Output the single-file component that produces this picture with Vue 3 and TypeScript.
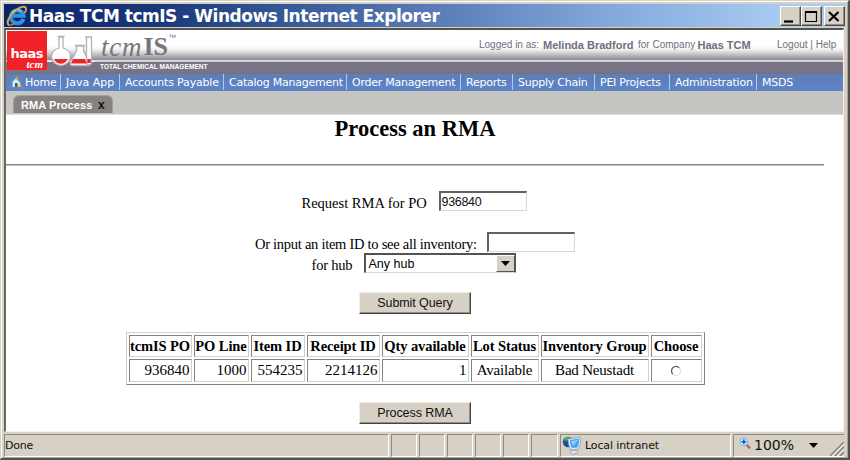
<script setup lang="ts">
import { ref } from 'vue'

interface MenuItem { label: string; key: string }

const menu: MenuItem[] = [
  { label: 'Home', key: 'home' },
  { label: 'Java App', key: 'java' },
  { label: 'Accounts Payable', key: 'accounts' },
  { label: 'Catalog Management', key: 'catalog' },
  { label: 'Order Management', key: 'order' },
  { label: 'Reports', key: 'reports' },
  { label: 'Supply Chain', key: 'supply' },
  { label: 'PEI Projects', key: 'pei' },
  { label: 'Administration', key: 'admin' },
  { label: 'MSDS', key: 'msds' },
]
const headers = ['tcmIS PO', 'PO Line', 'Item ID', 'Receipt ID', 'Qty available', 'Lot Status', 'Inventory Group', 'Choose']
const widths = [63, 55, 54, 73, 87, 68, 108, 51]
const row = ['936840', '1000', '554235', '2214126', '1', 'Available', 'Bad Neustadt']
const po = ref('936840')
const item = ref('')
</script>

<template>
  <div class="window">
    <header class="titlebar">
      <svg class="ie" width="22" height="22" viewBox="0 0 22 22">
        <path d="M17.4 13.8A6.400 6.400 0 1 1 17.600 10.800H6.200" fill="none" stroke="#2f8fe0" stroke-width="4" />
        <path d="M6 8.200A5.600 5.600 0 0 1 15.500 6.500" fill="none" stroke="#9adcff" stroke-width="1.300" />
        <path d="M3.500 20.500C-.800 18.500 3.400 10.200 9.400 5.400C14 1.700 19.300 .400 20 3.400C20.400 5 19.200 7.200 18.600 8" fill="none" stroke="#e2a63c" stroke-width="1.900" />
        <path d="M3.600 20.300C5.600 20.400 8 18.800 9 18" fill="none" stroke="#c98a2e" stroke-width="1.300" />
      </svg>
      <h1 class="caption">Haas TCM tcmIS - Windows Internet Explorer</h1>
      <div class="controls">
        <button class="ctl" aria-label="Minimize"><svg width="18" height="18"><path d="M3 14.500h9" stroke="#000" stroke-width="2.200" /></svg></button>
        <button class="ctl" aria-label="Maximize"><svg width="18" height="18"><path d="M3.500 4.500h11v10h-11z" fill="none" stroke="#000" stroke-width="1.200" /><path d="M3 5h12" stroke="#000" stroke-width="2" /></svg></button>
        <button class="ctl close" aria-label="Close"><svg width="18" height="18"><path d="M4 5l9.500 9M13.500 5L4 14" stroke="#000" stroke-width="2.100" /></svg></button>
      </div>
    </header>

    <div class="viewport">
      <div class="banner">
        <div class="haas"><b>haas</b><i>tcm</i></div>
        <svg class="flasks" width="48" height="38" viewBox="0 0 48 38">
          <g fill="#fff" stroke="#b4b1b8" stroke-width="1.300">
            <path d="M10.500 6.500h7M12 7v11C7 19.500 4.500 22.500 4.500 26C4.500 31.500 9 35.500 14 35.500S23.500 31.500 23.500 26C23.500 22.500 20.500 19.500 16 18V7z" />
            <path d="M27.500 15.500h11M29.500 16v5L23.500 32c-1 2 0 3.500 2 3.500h15c2 0 3-1.500 2-3.500L36.500 21v-5z" />
            <path d="M38 7h7M39.500 7v25c0 4 5 4 5 0V7z" />
          </g>
          <path d="M7 29h14c-2 3-4 4.800-7 4.800s-6-2-7-4.800z" fill="#ef252b" />
          <path d="M26 29h12l2 4.500H24z" fill="#ef252b" />
          <path d="M40.300 29h3.400v4h-3.400z" fill="#ef252b" />
          <path d="M0 31.500h4.500M45 31.500h3" stroke="#fff" stroke-width="1" />
        </svg>
        <div class="brand">
          <div class="logo"><i>tcm</i><b>IS</b><sup>™</sup></div>
          <div class="tagline">TOTAL CHEMICAL MANAGEMENT</div>
        </div>
        <div class="login"><span class="lg">Logged in as:</span><b class="user">Melinda Bradford</b><span class="fc">for Company</span><b class="company">Haas TCM</b></div>
        <div class="links">Logout | Help</div>
      </div>

      <nav class="menu">
        <a v-for="m in menu" :key="m.key" :class="['entry', m.key]">
          <svg v-if="m.key === 'home'" class="house" width="13" height="12" viewBox="0 0 13 12">
            <path d="M2.500 5.500v5.500h7.500V5.500L6 2z" fill="#d9edf5" />
            <path d="M.800 6.700L5.700 1.500L11.200 6.700" fill="none" stroke="#4aa5b5" stroke-width="1.500" />
            <path d="M6.300 .500h2v3h-2z" fill="#d9a04c" />
            <path d="M5 7h2.500v4H5z" fill="#52565c" />
            <path d="M8 8h3v3H8z" fill="#efc078" />
          </svg>
          <span>{{ m.label }}</span>
        </a>
      </nav>

      <div class="tabs"><div class="tab"><span>RMA Process</span><b>x</b></div></div>

      <main class="page">
        <h2>Process an RMA</h2>
        <hr>
        <div class="line po"><label>Request RMA for PO</label><input v-model="po" type="text"></div>
        <div class="line item"><label>Or input an item ID to see all inventory:</label><input v-model="item" type="text"></div>
        <div class="line hub">
          <label>for hub</label>
          <div class="select"><span>Any hub</span><i class="drop"><svg width="9" height="5"><path d="M0 0h9L4.500 5z" /></svg></i></div>
        </div>
        <button class="btn submit">Submit Query</button>
        <table>
          <colgroup><col v-for="(w, i) in widths" :key="i" :style="{ width: w + 'px' }"></colgroup>
          <tbody>
            <tr><th v-for="h in headers" :key="h">{{ h }}</th></tr>
            <tr>
              <td v-for="(c, i) in row" :key="i" :class="i < 5 ? 'num' : 'txt'">{{ c }}</td>
              <td><svg class="radio" width="12" height="12" viewBox="0 0 12 12"><circle cx="6" cy="6" r="4.500" fill="#fff" stroke="#dedad2" /><path d="M2.800 9.200A4.500 4.500 0 0 1 9.200 2.800" fill="none" stroke="#606060" stroke-width="1.300" /></svg></td>
            </tr>
          </tbody>
        </table>
        <button class="btn process">Process RMA</button>
      </main>
    </div>

    <footer class="status">
      <div class="pane done">Done</div>
      <div v-for="n in 5" :key="n" class="pane slot"></div>
      <div class="pane slot last"></div>
      <div class="pane zone">
        <svg width="20" height="20" viewBox="0 0 20 20">
          <path d="M11 15l4 .500 1 2.500-6 1.500-2-2z" fill="#dfe3ea" stroke="#8d94a5" stroke-width=".700" />
          <circle cx="6" cy="7" r="5.200" fill="#1d4f9c" />
          <path d="M2 5c1-3 4-4 6-3L6 5 4 6z" fill="#55ad60" />
          <path d="M6 4l12-2c1 4 .500 9-1.500 12L9 15C7 12 6 8 6 4z" fill="#e5ebf5" stroke="#7d8cb0" stroke-width=".700" />
          <path d="M8 5l9-1.400c.500 3 0 6-1.500 9L10 13C8.500 11 8 8 8 5z" fill="#46a5ef" />
          <path d="M9 6l7-1-5 6z" fill="#8cd0fa" />
        </svg>
        <span>Local intranet</span>
      </div>
      <div class="pane zoom">
        <svg class="mag" width="12" height="13" viewBox="0 0 12 13"><path d="M7.500 7.500l3.500 4" stroke="#a36a45" stroke-width="2" /><circle cx="4.800" cy="4.800" r="4" fill="#d5ecff" stroke="#7daee0" /><path d="M4.800 2.300v5M2.300 4.800h5" stroke="#1558b5" stroke-width="1.600" /></svg>
        <span>100%</span>
        <svg class="tri" width="9" height="5"><path d="M0 0h9L4.500 5z" /></svg>
        <svg class="grip" width="14" height="14" viewBox="0 0 14 14"><path d="M0 14L14 0M5 14l9-9M10 14l4-4" stroke="#85827c" stroke-width="1.500" /><path d="M2 14L14 2M7 14l7-7" stroke="#fff" stroke-width="1" /></svg>
      </div>
    </footer>
  </div>
</template>

<style>
body { margin: 0; overflow: hidden; }
</style>

<style scoped>
* { box-sizing: border-box; }
.window { width: 850px; height: 460px; background: #d6d0c5; border: 1px solid #d6d0c5; border-right: 2px solid #55534f; border-bottom: 2px solid #55534f; box-shadow: inset 1px 1px #fff, inset -1px -1px #a9a59c; padding: 3px; display: flex; flex-direction: column; white-space: nowrap; overflow: hidden; }
.titlebar { height: 23px; flex: none; background: linear-gradient(90deg, #0a246a, #1a377a 18%, #2f5290 30%, #5d7fba 53%, #84a8dc 72%, #a6caf0 92%); display: flex; align-items: center; padding-left: 2px; }
.ie { flex: none; }
.caption { margin: 2px 0 0 1px; color: #fff; font: bold 17px/23px "DejaVu Sans", sans-serif; letter-spacing: -.48px; flex: 1; width: 0; }
.controls { display: flex; padding-right: 0; }
.ctl { width: 21px; height: 20px; padding: 0; border: 1px solid; border-color: #fff #4e4b47 #4e4b47 #fff; box-shadow: inset -1px -1px #918d84; background: #d6d0c5; display: flex; }
.close { margin-left: 2px; }
.viewport { height: 404px; flex: none; margin-top: 1px; margin-right: 1px; border: 1px solid #77746e; border-top: 2px solid #55534f; border-left: 2px solid #696763; border-right-color: #f4f1ea; border-bottom-color: #f4f1ea; background: #fff; display: flex; flex-direction: column; overflow: hidden; }
.banner { height: 44px; flex: none; background: linear-gradient(#fff 0, #fff 16px, #eee 20px, #bcbbc0 25px, #8c8a90 30px, #e3e2e5 30px, #c6c4ca 32px, #7b7484 32px, #7b7484 40px, #6c7390 44px); display: flex; font-family: "Liberation Sans", sans-serif; color: #6e6f7c; }
.haas { width: 40px; height: 39px; flex: none; margin-left: 1px; margin-top: 1px; background: #f02127; color: #fff; display: flex; flex-direction: column; align-items: flex-end; padding: 17px 4px 0 0; }
.haas b { font: bold 13px/12px "DejaVu Sans", sans-serif; letter-spacing: -.5px; height: 12px; flex: none; }
.haas i { font: italic bold 11px/9px "Liberation Serif", serif; flex: none; }
.flasks { flex: none; }
.brand { width: 124px; flex: none; padding-left: 5px; }
.logo { height: 32px; display: flex; font: 27px/34px "Liberation Serif", serif; color: #77757e; padding-left: 1px; }
.logo i { letter-spacing: .8px; }
.logo b { font-size: 26px; margin-left: 1px; }
.logo sup { font: 8px/10px "Liberation Sans", sans-serif; margin-top: 3px; }
.tagline { color: #fff; font: bold 6.600px/9px "Liberation Sans", sans-serif; }
.login { display: flex; align-items: center; height: 29px; margin-left: 260px; font-size: 10px; width: 275px; flex: none; }
.login b { font-size: 11px; }
.lg { width: 64px; }
.user { width: 95px; }
.fc { width: 59.500px; }
.links { font-size: 10px; line-height: 30px; margin-left: 23px; }
.menu { height: 17px; flex: none; display: flex; background: linear-gradient(#667da9, #5d7ebf 5px, #6086c8); color: #fff; font: 11px/17px "DejaVu Sans", sans-serif; letter-spacing: -.24px; }
.entry { height: 16px; flex: none; padding-left: 5px; border-right: 1px solid #a7cdf5; }
.home { width: 55px; padding-left: 4px; display: flex; }
.house { margin: 2px 2px 0 0; flex: none; }
.java { width: 59px; letter-spacing: 0; }
.accounts { width: 104px; letter-spacing: -.17px; }
.catalog { width: 123px; }
.order { width: 114px; }
.reports { width: 52px; }
.supply { width: 82px; }
.pei { width: 75px; }
.admin { width: 87px; letter-spacing: -.2px; }
.msds { border: 0; }
.tabs { height: 24px; flex: none; background: #c5c5c2; border-bottom: 1px solid #ddd; padding: 4px 0 0 7px; display: flex; }
.tab { width: 100px; height: 18px; background: #858280; border: 1px solid #a2a09e; border-bottom: 0; border-radius: 6px 6px 0 0; color: #fff; font: bold 11px/18px "Liberation Sans", sans-serif; display: flex; padding-left: 7px; letter-spacing: .08px; }
.tab span { width: 77px; }
.tab b { color: #111; font-size: 12px; }
.page { flex: 1; padding-right: 19px; display: flex; flex-direction: column; align-items: center; font: 14.500px/20px "Liberation Serif", serif; color: #000; }
h2 { margin: 0; font: bold 22.500px/27px "Liberation Serif", serif; }
hr { width: 100%; height: 2px; margin: 22px 0 25px; border: 0; border-top: 1px solid #858585; border-bottom: 1px solid #c2beb8; flex: none; }
.line { display: flex; height: 20px; flex: none; }
.line label { line-height: 24px; flex: none; }
.line.po { width: 227px; height: 21px; }
.po label { width: 137px; }
.line.item { width: 320px; margin-top: 20px; }
.item label { width: 232px; letter-spacing: -.27px; }
.line.hub { width: 207px; margin-top: 1px; }
.hub label { width: 52px; letter-spacing: -.2px; }
input { width: 88px; height: 20px; margin: 0; padding: 0 0 0 1px; background: #fff; border: 2px solid; border-color: #64615d #ddd8ce #ddd8ce #64615d; border-right-width: 1px; border-bottom-width: 1px; font: 12.500px/17px "Liberation Sans", sans-serif; letter-spacing: -.3px; color: #111; border-radius: 0; outline: 0; }
.select { width: 152px; height: 20px; border: 2px solid; border-color: #56534f #56534f #ddd8ce #56534f; border-right-width: 1px; border-bottom-width: 1px; display: flex; font: 12.500px/19px "Liberation Sans", sans-serif; padding-left: 3px; }
.select span { flex: 1; }
.drop { width: 19px; background: #d6d0c5; border: 1px solid #fff; border-right-color: #555; border-bottom-color: #555; display: flex; align-items: center; justify-content: center; }
.btn { width: 112px; height: 22px; flex: none; padding: 0; background: #d6d0c5; border: 1px solid; border-color: #f0ede5 #45424b #45424b #f0ede5; box-shadow: inset -1px -1px #938e85; font: 12.500px/20px "Liberation Sans", sans-serif; letter-spacing: -.08px; color: #111; }
.submit { margin-top: 19px; }
.process { margin-top: 18px; }
table { width: 579px; height: 52px; flex: none; margin-top: 18px; margin-bottom: -1px; table-layout: fixed; border: 1px solid; border-color: #d4d0c7 #85837f #85837f #d4d0c7; border-spacing: 2px; font: 15px/20px "Liberation Serif", serif; }
th, td { padding: 0; border: 1px solid; border-color: #85837f #d4d0c7 #d4d0c7 #85837f; text-align: center; }
th { height: 22px; font-size: 14.500px; letter-spacing: -.1px; }
td { height: 23px; line-height: 19px; }
td.num { text-align: right; padding-right: 1px; }
td.txt { letter-spacing: -.2px; }
.radio { display: block; margin: 0 auto; }
.status { height: 25px; flex: none; margin-top: 1px; display: flex; font: 11px/21px "DejaVu Sans", sans-serif; color: #111; padding-top: 1px; }
.pane { height: 23px; flex: none; border: 1px solid; border-color: #8e8a82 #fff #fff #8e8a82; margin-right: 2px; }
.done { width: 385px; padding-left: 0; letter-spacing: -.2px; }
.slot { width: 26px; }
.last { width: 27px; }
.zone { width: 171px; display: flex; padding-left: 1px; }
.zone span { margin-left: 3px; letter-spacing: -.12px; }
.zoom { width: 111px; display: flex; position: relative; border-right: 0; margin: 0; }
.mag { margin: 2px 3px 0 5px; }
.zoom span { font-size: 14px; width: 55px; }
.tri { margin-top: 8px; }
.grip { position: absolute; right: 0; bottom: 0; }
</style>
